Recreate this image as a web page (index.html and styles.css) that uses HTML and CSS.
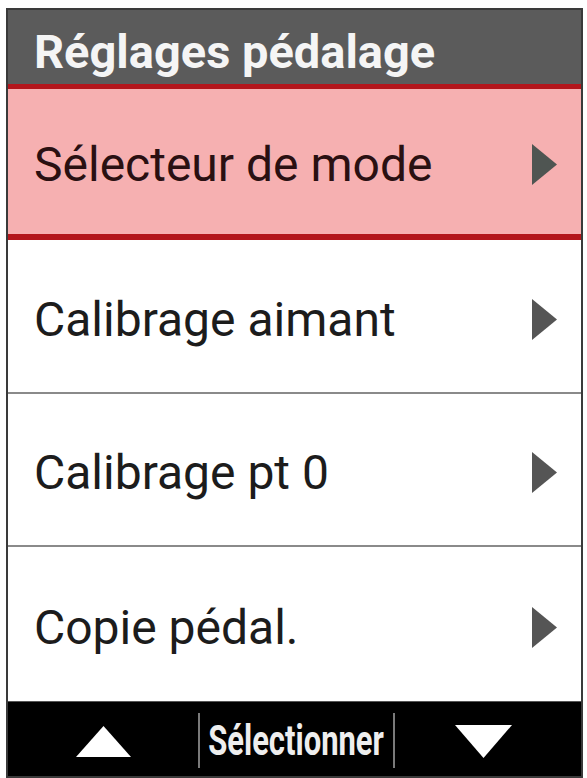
FILE: index.html
```html
<!DOCTYPE html>
<html lang="fr">
<head>
    <meta charset="UTF-8">
    <meta name="viewport" content="width=device-width, initial-scale=1.0">
    <title>Réglages pédalage</title>
    <link rel="stylesheet" href="styles.css">
</head>
<body>
    <div class="device">
        <div class="title">Réglages pédalage</div>

        <ul class="menu">
            <li class="item selected">
                <span class="label">Sélecteur de mode</span>
                <svg class="arrow" viewBox="0 0 25 41"><polygon points="0,0 25,20.5 0,41"/></svg>
            </li>
            <li class="item item-2">
                <span class="label">Calibrage aimant</span>
                <svg class="arrow" viewBox="0 0 25 41"><polygon points="0,0 25,20.5 0,41"/></svg>
            </li>
            <li class="item item-3">
                <span class="label">Calibrage pt 0</span>
                <svg class="arrow" viewBox="0 0 25 41"><polygon points="0,0 25,20.5 0,41"/></svg>
            </li>
            <li class="item item-4">
                <span class="label">Copie pédal.</span>
                <svg class="arrow" viewBox="0 0 25 41"><polygon points="0,0 25,20.5 0,41"/></svg>
            </li>
        </ul>

        <div class="softkeys">
            <div class="key">
                <svg class="key-up" viewBox="0 0 55 31"><polygon points="27.5,0 55,31 0,31"/></svg>
            </div>
            <div class="key key-mid">
                <span class="key-text">Sélectionner</span>
            </div>
            <div class="key">
                <svg class="key-down" viewBox="0 0 57 33"><polygon points="0,0 57,0 28.5,33"/></svg>
            </div>
        </div>
    </div>
</body>
</html>
```

FILE: styles.css
```css
:root {
    --header: #5b5b5b;
    --accent: #b3161c;
    --selected: #f6b0b1;
    --divider: #8a8a8a;
    --arrow: #555555;
}

* {
    box-sizing: border-box;
}

html, body {
    margin: 0;
    padding: 0;
    background: #ffffff;
}

body {
    font-family: Roboto, 'Liberation Sans', sans-serif;
    width: 587px;
    height: 778px;
    overflow: hidden;
}

.device {
    margin: 8px 4px 0 6px;
    border: 2px solid #3a3a3a;
    height: 770px;
    display: flex;
    flex-direction: column;
    background: #ffffff;
}

.title {
    height: 74px;
    background: var(--header);
    color: #f5f5f5;
    font-weight: 700;
    font-size: 47px;
    line-height: 64px;
    padding: 10px 0 0 26px;
    white-space: nowrap;
}

.menu {
    list-style: none;
    margin: 0;
    padding: 0;
}

.item {
    display: flex;
    align-items: center;
    justify-content: space-between;
    padding: 6px 24px 0 26px;
    border-bottom: 2px solid var(--divider);
    color: #1c1c1c;
    font-size: 48px;
}

.item.selected {
    height: 156px;
    background: var(--selected);
    border-top: 5px solid var(--accent);
    border-bottom: 6px solid var(--accent);
    color: #2a1012;
}

.item-2 {
    height: 154px;
}

.item-3 {
    height: 153px;
}

.item-4 {
    height: 154px;
    border-bottom: none;
}

.label {
    white-space: nowrap;
}

.arrow {
    width: 25px;
    height: 41px;
    fill: var(--arrow);
    flex-shrink: 0;
}

.selected .arrow {
    fill: #4f5552;
}

.softkeys {
    height: 75px;
    background: #000000;
    border-top: 1px solid #555555;
    display: grid;
    grid-template-columns: 190px 197px 1fr;
}

.key {
    display: flex;
    align-items: center;
    justify-content: center;
    padding-top: 4px;
}

.key-mid {
    margin: 11px 0 8px;
    padding-top: 0;
    border-left: 2px solid #7a7a7a;
    border-right: 2px solid #7a7a7a;
}

.key-text {
    display: inline-block;
    color: #eeeeee;
    font-weight: 700;
    font-size: 43px;
    line-height: 1;
    transform: scaleX(0.72);
    white-space: nowrap;
}

.key-up {
    width: 55px;
    height: 31px;
    fill: #ffffff;
}

.key-down {
    width: 57px;
    height: 33px;
    fill: #ffffff;
    margin-left: -10px;
}
```
